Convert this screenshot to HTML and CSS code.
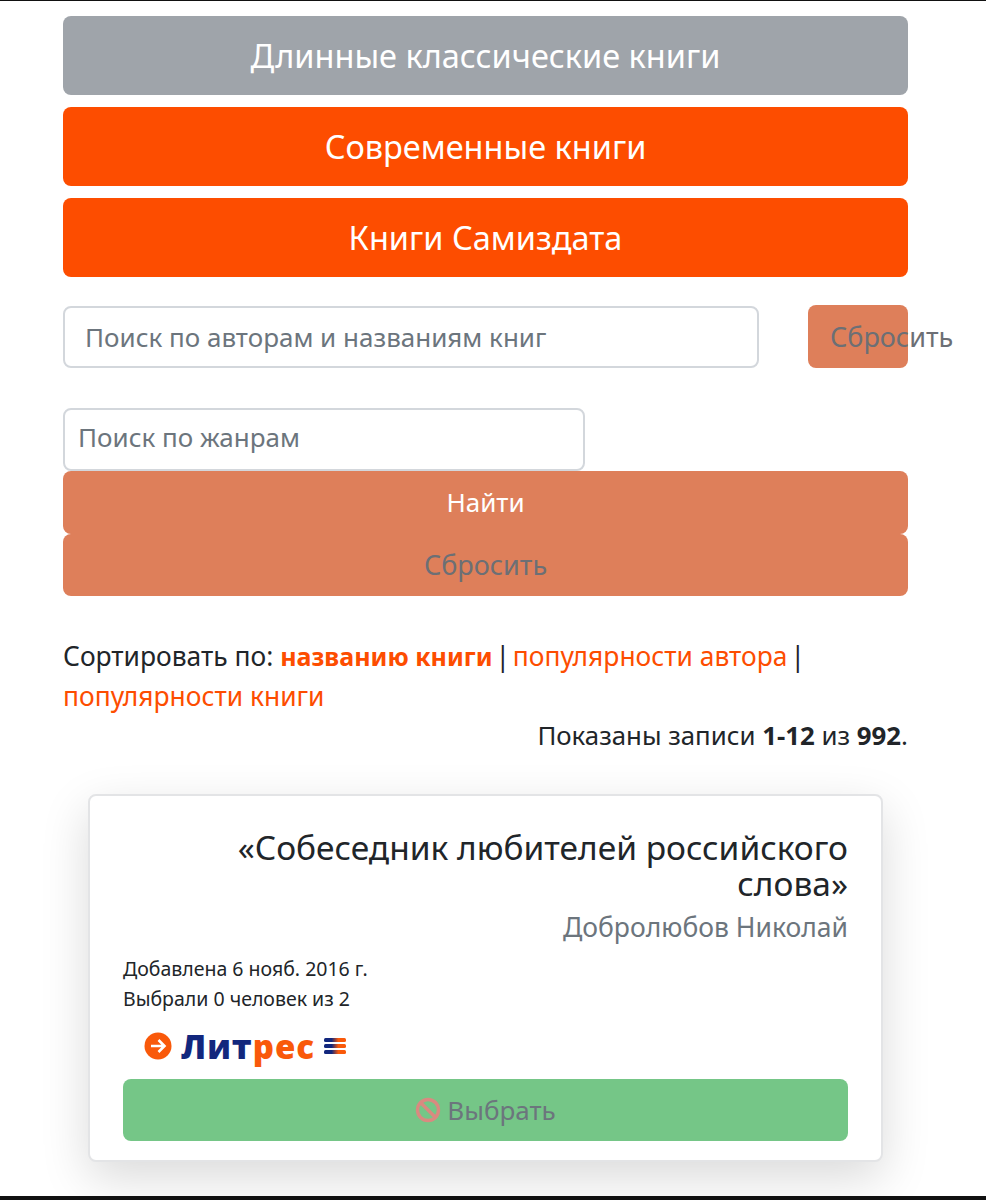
FILE: index.html
```html
<!DOCTYPE html>
<html lang="ru">
<head>
  <meta charset="UTF-8">
  <title>Книги</title>
  <meta name="viewport" content="width=device-width, initial-scale=1.0">
  <link rel="stylesheet" href="styles.css">
</head>
<body>

<div class="pagina">

  <!-- КАТЕГОРИИ -->
  <div class="categorias">
    <a class="categoria gris">Длинные классические книги</a>
    <a class="categoria">Современные книги</a>
    <a class="categoria">Книги Самиздата</a>
  </div>

  <!-- ПОИСК -->
  <div class="busqueda">
    <div class="campo campo-autor">Поиск по авторам и названиям книг</div>
    <div class="boton-chico"><span>Сбросить</span></div>
  </div>

  <div class="campo campo-genero">Поиск по жанрам</div>
  <div class="boton-ancho blanco">Найти</div>
  <div class="boton-ancho gris-texto">Сбросить</div>

  <!-- СОРТИРОВКА -->
  <div class="orden">
    Сортировать по: <a class="activo">названию книги</a> <span class="raya">|</span> <a>популярности автора</a> <span class="raya">|</span> <a>популярности книги</a>
  </div>
  <div class="resumen">Показаны записи <b>1-12</b> из <b>992</b>.</div>

  <!-- КНИГА -->
  <div class="tarjeta">
    <h2>«Собеседник любителей российского слова»</h2>
    <div class="autor">Добролюбов Николай</div>
    <div class="dato">Добавлена 6 нояб. 2016 г.</div>
    <div class="dato">Выбрали 0 человек из 2</div>
    <div class="litres">
      <svg width="28" height="28" viewBox="0 0 28 28">
        <circle cx="14" cy="14" r="13.5" fill="#f9590a"/>
        <path d="M7 14h13M14.5 8l6 6-6 6" fill="none" stroke="#fff" stroke-width="2.6"/>
      </svg>
      <span class="litres-nombre">Лит<em>рес</em></span>
      <svg width="22" height="18" viewBox="0 0 22 18">
        <defs>
          <linearGradient id="barra">
            <stop offset="0.35" stop-color="#12277d"/>
            <stop offset="0.65" stop-color="#f9590a"/>
          </linearGradient>
        </defs>
        <rect y="1" width="22" height="4" rx="1.5" fill="url(#barra)"/>
        <rect y="7" width="22" height="4" rx="1.5" fill="url(#barra)"/>
        <rect y="13" width="22" height="4" rx="1.5" fill="url(#barra)"/>
      </svg>
    </div>
    <div class="elegir">
      <svg width="26" height="26" viewBox="0 0 26 26">
        <circle cx="13" cy="13" r="10.5" fill="none" stroke="#d98a80" stroke-width="3.4"/>
        <path d="M6 6l14 14" stroke="#d98a80" stroke-width="3.4"/>
      </svg>
      Выбрать
    </div>
  </div>

</div>

<div class="pie"></div>

</body>
</html>
```

FILE: styles.css
```css
html, body {
  margin: 0;
  padding: 0;
  background: white;
  color: #212529;
  font-family: 'Noto Sans', sans-serif;
  font-size: 26px;
  overflow: hidden;
}

body {
  height: 1200px;
  border-top: 1px solid #111;
  box-sizing: border-box;
  position: relative;
}

.pagina {
  width: 845px;
  margin-left: 63px;
  padding-top: 15px;
}

.categorias {
  display: flex;
  flex-direction: column;
  gap: 12px;
}

.categoria {
  height: 79px;
  line-height: 79px;
  text-align: center;
  font-size: 32.5px;
  color: white;
  background: #fd4d00;
  border-radius: 8px;
}

.categoria.gris {
  background: #9fa4aa;
}

.busqueda {
  display: flex;
  justify-content: space-between;
  margin-top: 28px;
}

.campo {
  height: 62px;
  line-height: 58px;
  box-sizing: border-box;
  border: 2px solid #d3d7dc;
  border-radius: 8px;
  color: #6c757d;
  background: white;
}

.campo-autor {
  width: 696px;
  margin-top: 1px;
  padding-left: 20px;
}

.boton-chico {
  width: 100px;
  height: 63px;
  line-height: 63px;
  font-size: 27px;
  background: #de7f5a;
  border-radius: 8px;
  color: #6c6f75;
  padding-left: 22px;
  box-sizing: border-box;
  white-space: nowrap;
}

.campo-genero {
  width: 522px;
  height: 63px;
  line-height: 55px;
  margin-top: 40px;
  padding-left: 13px;
}

.boton-ancho {
  height: 63px;
  line-height: 63px;
  text-align: center;
  background: #de7f5a;
  border-radius: 8px;
  color: #6c757d;
}

.boton-ancho.blanco {
  color: white;
}

.boton-ancho.gris-texto {
  height: 62px;
  line-height: 61px;
  font-size: 27px;
  color: #6c6f75;
}

.orden {
  margin-top: 40px;
  margin-bottom: -1px;
  line-height: 40px;
  font-size: 26.4px;
}

.orden a {
  color: #fd4d00;
}

.orden a.activo {
  font-size: 25px;
  font-weight: bold;
}

.raya {
  margin: 0 -4px;
}

.resumen {
  text-align: right;
  line-height: 40px;
  font-size: 25.8px;
}

.tarjeta {
  width: 795px;
  height: 368px;
  margin: 39px 0 0 25px;
  padding: 35px 33px 0;
  box-sizing: border-box;
  border: 2px solid #e3e4e6;
  border-radius: 8px;
  box-shadow: 0 16px 48px rgba(0, 0, 0, 0.15);
  background: white;
}

.tarjeta h2 {
  margin: -2px 0 2px;
  padding-left: 60px;
  text-align: right;
  font-size: 33.5px;
  font-weight: normal;
  line-height: 36px;
}

.autor {
  text-align: right;
  color: #6c757d;
  font-size: 26.5px;
  line-height: 48px;
}

.dato {
  font-size: 19.5px;
  line-height: 30px;
}

.autor + .dato {
  margin-top: 3px;
}

.litres {
  display: flex;
  align-items: center;
  gap: 9px;
  height: 40px;
  margin: 12px 0 13px 21px;
}

.litres-nombre {
  font-family: 'Open Sans', sans-serif;
  font-size: 33px;
  font-weight: 800;
  letter-spacing: 1px;
  color: #12277d;
}

.litres-nombre em {
  font-style: normal;
  color: #f9590a;
}

.elegir {
  display: flex;
  align-items: center;
  justify-content: center;
  gap: 6px;
  height: 62px;
  background: #75c687;
  border-radius: 8px;
  color: #6c757d;
}

.pie {
  position: absolute;
  left: 0;
  right: 0;
  bottom: 0;
  height: 4px;
  background: #111;
}
```
